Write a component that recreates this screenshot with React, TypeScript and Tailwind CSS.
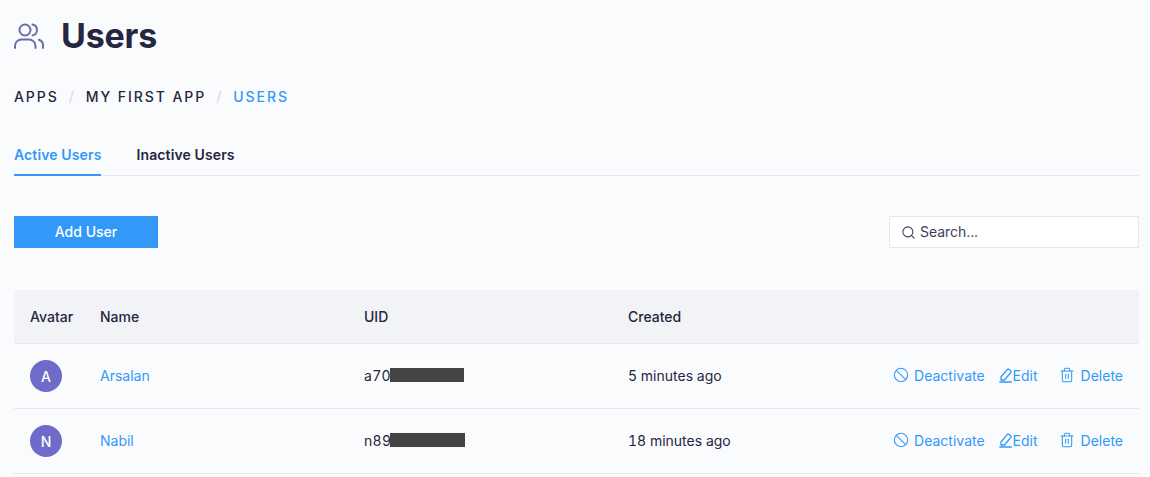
import { Ban, Search, Trash2 } from 'lucide-react';

const USERS = [
  { initial: 'A', name: 'Arsalan', uid: 'a70', maskWidth: 'w-[74px]', created: '5 minutes ago' },
  { initial: 'N', name: 'Nabil', uid: 'n89', maskWidth: 'w-[75px]', created: '18 minutes ago' },
];

function UsersIcon() {
  return (
    <svg width="30" height="26" viewBox="0 0 30 26" fill="none" stroke="#6e6da8" strokeWidth="2" strokeLinecap="round" className="shrink-0">
      <circle cx="11" cy="7" r="5.5" />
      <path d="M18.5 1.6a5.5 5.5 0 0 1 0 10.8" />
      <path d="M1 25v-2a6.5 6.5 0 0 1 6.5-6.5h7.5a6.5 6.5 0 0 1 6.5 6.5v2" />
      <path d="M25 16.8a6 6 0 0 1 4 5.7V25" />
    </svg>
  );
}

function EditIcon() {
  return (
    <svg width="14" height="16" viewBox="0 0 14 16" fill="none" stroke="currentColor" strokeWidth="1.3" strokeLinecap="round" strokeLinejoin="round" className="shrink-0">
      <path d="M2 10 8.2 2.6a1.3 1.3 0 0 1 1.8-.2l1.6 1.3a1.3 1.3 0 0 1 .2 1.8L5.5 13H2z" />
      <path d="M0.8 15h11.6" />
    </svg>
  );
}

export default function App() {
  return (
    <div className="h-[477px] overflow-hidden bg-[#fafbfd] pl-[14px] pr-[11px] font-['Inter',sans-serif] text-[#26263f]">
      <header className="flex h-[71px] items-center gap-[17px]">
        <UsersIcon />
        <h1 className="text-[34px] leading-none font-bold tracking-[-0.2px]">Users</h1>
      </header>

      <nav className="mt-[17px] flex h-[18px] items-center text-[14px] leading-none font-medium tracking-[1.93px]">
        <span>APPS</span>
        <span className="mx-[10px] text-[#d9dbe6]">/</span>
        <span>MY FIRST APP</span>
        <span className="mx-[10px] text-[#d9dbe6]">/</span>
        <span className="text-[#3399f8]">USERS</span>
      </nav>

      <div className="mt-[28px] flex h-[42px] gap-[35px] border-b border-[#e6e8ee] text-[14px] font-semibold tracking-[0.12px]">
        <div className="-mb-[1px] flex h-[42px] items-start border-b-2 border-[#3399f8] pt-[10px] text-[#3399f8]">Active Users</div>
        <div className="pt-[10px]">Inactive Users</div>
      </div>

      <div className="mt-[40px] flex items-center justify-between">
        <button className="h-[32px] w-[144px] bg-[#3399f8] pb-[2px] text-[14px] font-medium text-white">Add User</button>
        <div className="flex h-[32px] w-[250px] items-center gap-[4px] border border-[#e6e8ee] bg-white pl-[11px] text-[14px] tracking-[-0.05px] text-[#3d3d5c]">
          <Search size={15} strokeWidth={1.7} className="mt-[1px]" />
          <span className="pb-[2px]">Search...</span>
        </div>
      </div>

      <div className="mt-[42px] text-[14px]">
        <div className="flex h-[54px] items-center border-b border-[#e6e8ee] bg-[#f2f3f7] font-medium">
          <div className="w-[86px] pl-[16px]">Avatar</div>
          <div className="w-[264px]">Name</div>
          <div className="w-[264px]">UID</div>
          <div>Created</div>
        </div>
        {USERS.map((user) => (
          <div key={user.name} className="flex h-[65px] items-center border-b border-[#e6e8ee]">
            <div className="w-[86px] pl-[16px]">
              <div className="flex h-[32px] w-[32px] items-center justify-center rounded-full bg-[#6f6bcb] font-medium text-white">
                {user.initial}
              </div>
            </div>
            <div className="w-[264px] pb-[2px] text-[#3399f8]">{user.name}</div>
            <div className="flex w-[264px] items-center pb-[2px]">
              <span className="w-[26px] tracking-[0.3px] tabular-nums">{user.uid}</span>
              <span className={`h-[14px] ${user.maskWidth} bg-[#444444]`} />
            </div>
            <div className="pb-[2px] tabular-nums">{user.created}</div>
            <div className="ml-auto flex items-center pr-[16px] pb-[2px] text-[#3399f8]">
              <Ban size={16} strokeWidth={1.6} />
              <span className="ml-[5px]">Deactivate</span>
              <span className="ml-[14px]"><EditIcon /></span>
              <span>Edit</span>
              <Trash2 size={16} strokeWidth={1.6} className="ml-[21px]" />
              <span className="ml-[6px]">Delete</span>
            </div>
          </div>
        ))}
      </div>
    </div>
  );
}
